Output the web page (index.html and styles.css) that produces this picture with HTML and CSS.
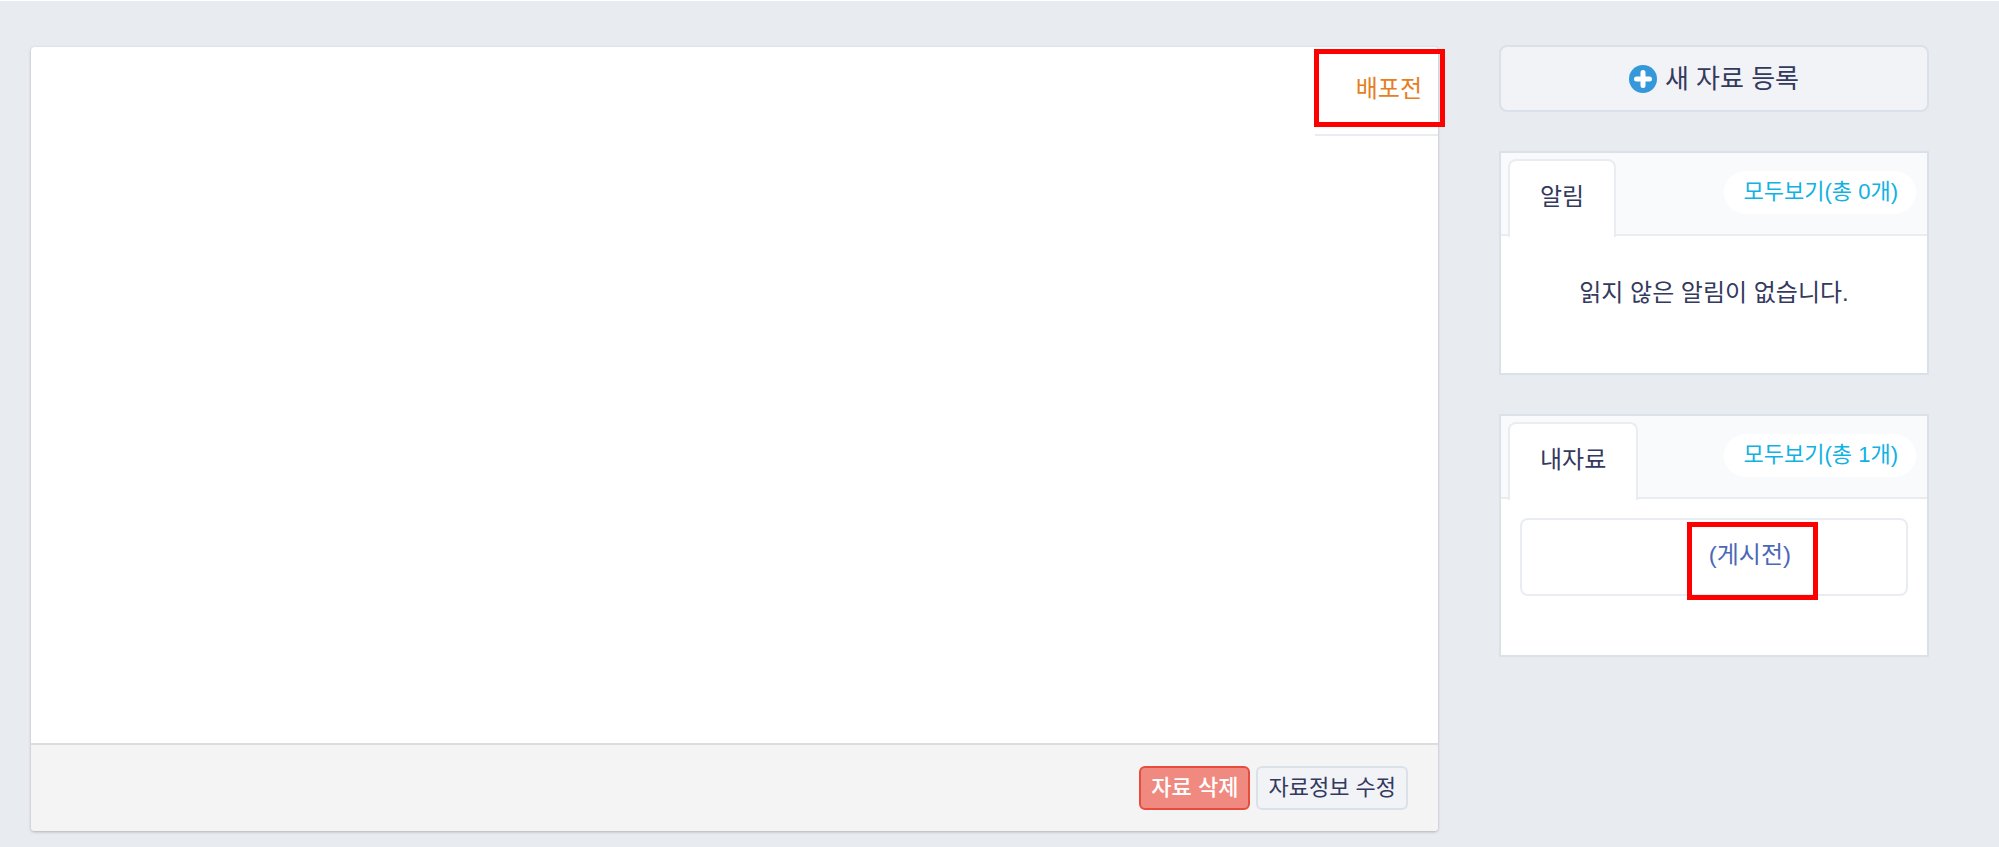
FILE: index.html
```
<!DOCTYPE html>
<html lang="ko">
<head>
    <meta charset="UTF-8">
    <meta name="viewport" content="width=device-width, initial-scale=1.0">
    <title>자료</title>
    <link rel="stylesheet" href="styles.css">
</head>
<body>
    <div class="container">
        <main class="panel">
            <div class="panel-body">
                <div class="status">
                    <span class="status-text">배포전</span>
                    <div class="highlight"></div>
                </div>
            </div>
            <div class="panel-footer">
                <button type="button" class="btn btn-danger">자료 삭제</button>
                <button type="button" class="btn">자료정보 수정</button>
            </div>
        </main>

        <aside class="sidebar">
            <button type="button" class="btn btn-new">
                <svg class="icon-plus" viewBox="0 0 28 28" aria-hidden="true">
                    <circle cx="14" cy="14" r="14" fill="#3498db"/>
                    <path d="M14 7.5v13M7.5 14h13" stroke="#fff" stroke-width="5" stroke-linecap="round"/>
                </svg>
                <span>새 자료 등록</span>
            </button>

            <section class="card">
                <div class="card-header">
                    <h2 class="tab">알림</h2>
                    <a href="#" class="more">모두보기(총 0개)</a>
                </div>
                <p class="empty">읽지 않은 알림이 없습니다.</p>
            </section>

            <section class="card">
                <div class="card-header">
                    <h2 class="tab">내자료</h2>
                    <a href="#" class="more">모두보기(총 1개)</a>
                </div>
                <div class="card-list">
                    <div class="item">
                        <a href="#" class="item-link">(게시전)</a>
                        <div class="highlight"></div>
                    </div>
                </div>
            </section>
        </aside>
    </div>
</body>
</html>
```

FILE: styles.css
```
* {
    box-sizing: border-box;
}

body {
    margin: 0;
    min-height: 100vh;
    border-top: 1px solid #fff;
    background-color: #e8ebf0;
    color: #34395e;
    font-family: "Liberation Sans", "Noto Sans CJK KR", sans-serif;
    font-size: 24px;
    line-height: 32px;
}

a {
    text-decoration: none;
}

.container {
    display: flex;
    align-items: flex-start;
    gap: 61px;
    padding: 44px 70px 14px 31px;
}

/* main panel */
.panel {
    flex: 1;
    display: flex;
    flex-direction: column;
    min-height: calc(100vh - 63px);
    margin-top: 2px;
    background-color: #fff;
    border-radius: 4px;
    box-shadow: 0 1px 3px rgba(0, 0, 0, 0.25);
}

.panel-body {
    flex: 1;
    display: flex;
    justify-content: flex-end;
    align-items: flex-start;
}

.status {
    position: relative;
    padding: 26px 16px 29px 41px;
    border-bottom: 2px solid #e9edf1;
}

.status-text {
    color: #e67e22;
}

.panel-footer {
    display: flex;
    justify-content: flex-end;
    gap: 6px;
    padding: 21px 30px;
    background-color: #f4f4f4;
    border-top: 2px solid #ddd;
    border-radius: 0 0 4px 4px;
}

.btn {
    padding: 0 10px;
    height: 44px;
    border: 2px solid #dae1e9;
    border-radius: 6px;
    background-color: #f1f3f7;
    color: #34395e;
    font-family: inherit;
    font-size: 22px;
    line-height: 32px;
    cursor: pointer;
}

.btn-danger {
    border-color: #e74c3c;
    background-color: #f08a80;
    color: #fff;
    font-weight: 500;
}

.btn-new {
    display: flex;
    justify-content: center;
    align-items: center;
    gap: 8px;
    height: 67px;
    border-radius: 8px;
    font-size: 26px;
}

.icon-plus {
    width: 28px;
    height: 28px;
}

/* sidebar */
.sidebar {
    display: flex;
    flex-direction: column;
    gap: 39px;
    width: 430px;
}

.card {
    background-color: #fff;
    border: 2px solid #dae1e9;
}

.card-header {
    display: flex;
    justify-content: space-between;
    align-items: flex-start;
    height: 83px;
    padding: 6px 11px 0 7px;
    background-color: #f9fafc;
    border-bottom: 2px solid #e9edf1;
}

.tab {
    height: 78px;
    margin: 0;
    padding: 20px 30px 0;
    background-color: #fff;
    border: 2px solid #e9edf1;
    border-bottom: 0;
    border-radius: 8px 8px 0 0;
    font-size: 24px;
    font-weight: normal;
}

.more {
    margin-top: 12px;
    padding: 5px 18px 6px 20px;
    background-color: #fff;
    border-radius: 22px;
    color: #0fb2e3;
    font-size: 22px;
}

.empty {
    margin: 0;
    padding: 41px 20px 64px;
    text-align: center;
}

.card-list {
    padding: 19px 19px 59px;
}

.item {
    position: relative;
    display: flex;
    justify-content: flex-end;
    height: 78px;
    padding: 19px 115px 0 20px;
    border: 2px solid #e9edf1;
    border-radius: 8px;
}

.item-link {
    color: #4b67b8;
}

/* red marker boxes */
.highlight {
    position: absolute;
    width: 131px;
    height: 78px;
    border: 5px solid #f00;
    pointer-events: none;
}

.status .highlight {
    top: 2px;
    right: -7px;
}

.item .highlight {
    top: 2px;
    right: 88px;
}
```
